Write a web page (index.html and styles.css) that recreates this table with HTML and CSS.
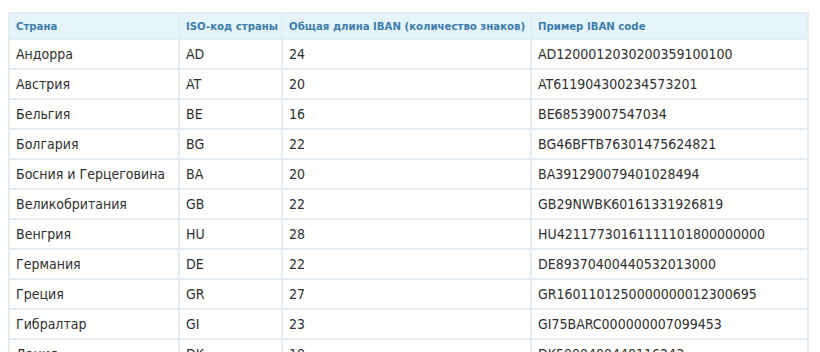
FILE: index.html
```html
<!DOCTYPE html>
<html lang="ru">
<head>
<meta charset="utf-8">
<link rel="stylesheet" href="styles.css">
</head>
<body>
<table class="iban">
  <colgroup>
    <col class="c1"><col class="c2"><col class="c3"><col class="c4">
  </colgroup>
  <thead>
    <tr><th>Страна</th><th>ISO-код страны</th><th>Общая длина IBAN (количество знаков)</th><th>Пример IBAN code</th></tr>
  </thead>
  <tbody>
    <tr><td>Андорра</td><td>AD</td><td>24</td><td>AD1200012030200359100100</td></tr>
    <tr><td>Австрия</td><td>AT</td><td>20</td><td>AT611904300234573201</td></tr>
    <tr><td>Бельгия</td><td>BE</td><td>16</td><td>BE68539007547034</td></tr>
    <tr><td>Болгария</td><td>BG</td><td>22</td><td>BG46BFTB76301475624821</td></tr>
    <tr><td>Босния и Герцеговина</td><td>BA</td><td>20</td><td>BA391290079401028494</td></tr>
    <tr><td>Великобритания</td><td>GB</td><td>22</td><td>GB29NWBK60161331926819</td></tr>
    <tr><td>Венгрия</td><td>HU</td><td>28</td><td>HU42117730161111101800000000</td></tr>
    <tr><td>Германия</td><td>DE</td><td>22</td><td>DE89370400440532013000</td></tr>
    <tr><td>Греция</td><td>GR</td><td>27</td><td>GR1601101250000000012300695</td></tr>
    <tr><td>Гибралтар</td><td>GI</td><td>23</td><td>GI75BARC000000007099453</td></tr>
    <tr><td>Дания</td><td>DK</td><td>18</td><td>DK5000400440116243</td></tr>
  </tbody>
</table>
</body>
</html>
```

FILE: styles.css
```css
html, body {
  margin: 0;
  padding: 0;
  background: #ffffff;
}
body {
  padding: 12px 0 0 8px;
  font-family: "DejaVu Sans Condensed", "DejaVu Sans", sans-serif;
  color: #333333;
}
.iban {
  border-collapse: collapse;
  table-layout: fixed;
  width: 799px;
}
.c1 { width: 170px; }
.c2 { width: 103px; }
.c3 { width: 249px; }
.c4 { width: 277px; }
.iban th, .iban td {
  border: 2px solid #e3edf3;
  text-align: left;
  padding: 0 6px;
  white-space: nowrap;
  overflow: hidden;
}
.iban th {
  background: #e5f4fb;
  color: #3d7dab;
  font-size: 11.3px;
  font-weight: bold;
  height: 24px;
  font-family: "DejaVu Sans Condensed", sans-serif;
  font-stretch: condensed;
}
.iban td {
  height: 28px;
  font-size: 14px;
  color: #2f2f2f;
}
```
